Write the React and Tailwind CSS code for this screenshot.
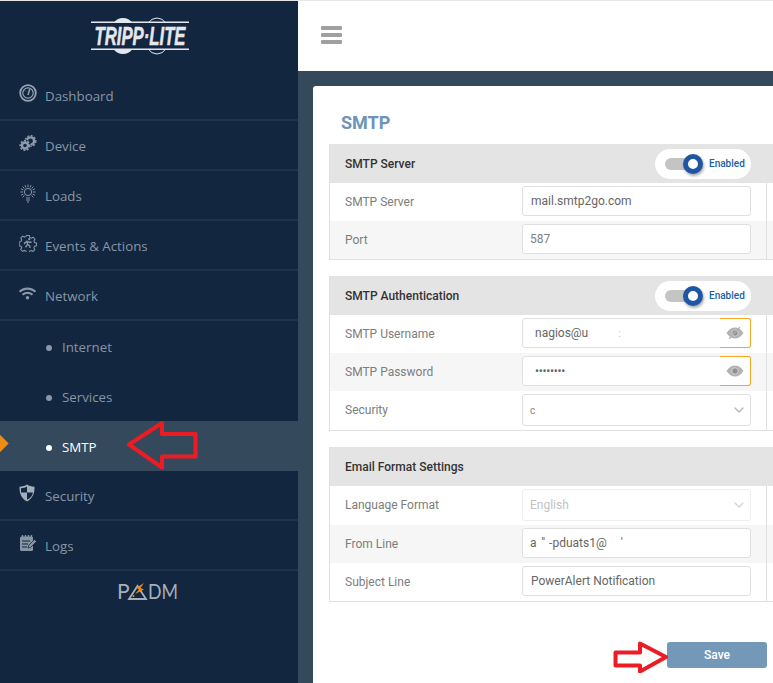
import { FaWifi } from 'react-icons/fa';
import { ChevronDown } from 'lucide-react';

const Gauge = () => (
  <svg width="18" height="18" viewBox="0 0 18 18" fill="none">
    <circle cx="9" cy="9" r="7.800" stroke="#95a3b1" strokeWidth="1.800" />
    <circle cx="9" cy="9" r="5.200" stroke="#95a3b1" strokeWidth="1.200" />
    <path d="M9 11 L10.800 5" stroke="#95a3b1" strokeWidth="1.500" />
    <path d="M6 6.500l.8.8" stroke="#95a3b1" strokeWidth="1" />
  </svg>
);

const Gears = () => (
  <svg width="18" height="17" viewBox="0 0 18 17" fill="none" stroke="#8d9cab">
    <circle cx="11.500" cy="6" r="3.600" strokeWidth="2.400" />
    <circle cx="11.500" cy="6" r="5.300" strokeWidth="1.500" strokeDasharray="2 1.500" />
    <circle cx="6" cy="10.500" r="6" fill="#12263f" stroke="none" />
    <circle cx="6" cy="10.500" r="3" strokeWidth="2.400" />
    <circle cx="6" cy="10.500" r="4.800" strokeWidth="1.600" strokeDasharray="2 1.500" />
  </svg>
);

const Bulb = () => (
  <svg width="18" height="20" viewBox="0 0 18 20" fill="none" stroke="currentColor" strokeWidth="1">
    <circle cx="9" cy="9" r="3.600" />
    <path d="M9 1.500v2.500M1.500 9H4M14 9h2.500M3.600 3.600l1.800 1.800M12.600 5.400l1.800-1.800M3.600 14.400l1.800-1.800M12.600 12.600l1.800 1.800M2 5.800l2.400 1M13.600 6.800l2.400-1M2 12.200l2.400-1M13.600 11.200l2.400 1M6 2.200l1 2.300M11 4.500l1-2.300" />
    <path d="M7 15h4M7 17h4M8 19h2" strokeWidth="1.200" />
  </svg>
);

const GearRun = () => (
  <svg width="18" height="18" viewBox="0 0 18 18" fill="none" stroke="currentColor">
    <path d="M7.500 1.200h3l.4 2 1.700.8 1.800-1 2 2.200-1.100 1.700.6 1.700 2 .5v2.900l-2 .5-.7 1.700 1 1.700-2.100 2-1.700-1-1.700.6-.5 1.900H7.400l-.5-1.900-1.700-.7-1.700 1-2-2 1-1.800-.7-1.600-1.900-.5V7.900l2-.5.6-1.700-1-1.800 2-2 1.800 1 1.600-.7z" strokeWidth="1.100" transform="scale(0.96) translate(0.3 0.3)" />
    <path d="M6.500 13.200l2-2.600-.3-3.200 2.600 1 1.800-.4M8.400 7.500L6 8.600l-.6 1.600M8.800 10.600l2 1.200.2 2.200" strokeWidth="1.400" />
    <circle cx="10.200" cy="5.200" r="1.100" fill="currentColor" stroke="none" />
  </svg>
);

const Shield = () => (
  <svg width="16" height="18" viewBox="0 0 16 18">
    <path d="M8 .5C10 1.800 12.600 2.600 15.500 2.800c.2 6.500-1.600 11.500-7.500 14.700C2.100 14.300.3 9.300.5 2.800 3.400 2.600 6 1.800 8 .5z" fill="#a3afbb" />
    <path d="M8 2.400v6.200H2.100C2 6.900 2 5.700 2 4.200 4.200 4 6.300 3.400 8 2.400zM8 8.600h5.900c-.4 3-1.900 5.300-5.900 7.200z" fill="#12263f" />
  </svg>
);

const Notepad = () => (
  <svg width="18" height="18" viewBox="0 0 18 18" fill="none">
    <rect x="1" y="2.500" width="13" height="14.500" rx="1.500" fill="currentColor" />
    <path d="M3.500 1v3M6.500 1v3M9.500 1v3M12.500 1v3" stroke="currentColor" strokeWidth="1.400" />
    <path d="M3 7h8M3 10h6M3 13h5" stroke="#12263f" strokeWidth="1.200" />
    <path d="M9 14l.6-2.600 6-6 2 2-6 6z" fill="currentColor" stroke="#12263f" strokeWidth="0.800" />
  </svg>
);

const Eye = ({ off }) => (
  <svg width="18" height="12" viewBox="0 0 18 12" fill="none">
    <path d="M0.500 6C3 2 6 .5 9 .5S15 2 17.500 6C15 10 12 11.500 9 11.500S3 10 .5 6z" fill="#b3b3b3" />
    <circle cx="9" cy="6" r="3.200" fill="#8f8f8f" stroke="#dddddd" strokeWidth="0.800" />
    {off && <path d="M3 12 14 0" stroke="#b3b3b3" strokeWidth="1.200" />}
  </svg>
);

const Logo = () => (
  <svg width="98" height="38" viewBox="0 0 98 38" className="overflow-visible">
    <ellipse cx="32" cy="19" rx="14" ry="18" fill="#e4e8ee" />
    <ellipse cx="66" cy="19" rx="13" ry="18" fill="#12263f" stroke="#e4e8ee" strokeWidth="1" />
    <rect x="0" y="5" width="98" height="28" fill="#12263f" />
    <rect x="0" y="4.500" width="98" height="1.500" fill="#e4e8ee" />
    <rect x="0" y="31.500" width="98" height="1.500" fill="#e4e8ee" />
    <text x="49" y="28" textAnchor="middle" textLength="91" lengthAdjust="spacingAndGlyphs" fontFamily="'Liberation Sans', sans-serif" fontWeight="700" fontStyle="italic" fontSize="26" stroke="#e4e8ee" strokeWidth="0.500" fill="#e4e8ee">TRIPP·LITE</text>
  </svg>
);

const Padm = () => (
  <svg width="62" height="20" viewBox="0 0 62 20" className="overflow-visible">
    <text x="0" y="17" fontFamily="Lato, sans-serif" fontWeight="400" fontSize="21" fill="#a5b0bb">P</text>
    <path d="M20.500 4 L29 17 H12 Z" fill="none" stroke="#a5b0bb" strokeWidth="1.800" />
    <path d="M27 1 L19 6 L22.500 7 L18 12 L27 7.500 L23.500 6 Z" fill="#f08a12" />
    <circle cx="16.500" cy="14" r="1" fill="#f08a12" />
    <text x="31" y="17" textLength="30" lengthAdjust="spacingAndGlyphs" fontFamily="Lato, sans-serif" fontWeight="400" fontSize="21" fill="#a5b0bb">DM</text>
  </svg>
);

const NavItem = ({ icon, label }) => (
  <div className="flex h-[50px] items-center border-b-2 border-[#1f3448] pl-[19px] text-[#8796a6]">
    <span className="flex w-[26px] -translate-y-0.5 items-center">{icon}</span>
    <span className="pt-[4px]">{label}</span>
  </div>
);

const SubItem = ({ label, active }) => (
  <div className={active ? 'relative flex h-[50px] items-center bg-[#34495c] pl-[46px] pt-[4px] text-white' : 'flex h-[50px] items-center pl-[46px] pt-[4px] text-[#8796a6]'}>
    {active && <span className="absolute left-[-7px] top-[16px] h-[13px] w-[13px] rotate-45 bg-[#ef8a12]" />}
    <span className={active ? 'mr-[10px] h-[6px] w-[6px] rounded-full bg-white' : 'mr-[10px] h-[6px] w-[6px] rounded-full bg-[#8b97a5]'} />
    <span>{label}</span>
  </div>
);

const Toggle = () => (
  <div className="flex h-[30px] w-[96px] items-center rounded-full bg-white pl-[10px]">
    <div className="relative h-[12px] w-[30px] rounded-full bg-[#c4c4c4]">
      <span className="absolute left-[18px] top-[-4px] h-[20px] w-[20px] rounded-full border-[5px] border-[#1f55a5] bg-white shadow-[1px_2px_3px_rgba(0,0,0,0.35)]" />
    </div>
    <span className="ml-[14px] text-[10px] font-medium text-[#1c5fa8]">Enabled</span>
  </div>
);

const Input = ({ children, tall, className = 'border-[#e0e0e0] text-[#666]' }) => (
  <div className={`relative flex w-[229px] items-center rounded-[3px] border bg-white text-[12px] ${tall ? 'h-[32px]' : 'h-[30px]'} ${className}`}>
    {children}
  </div>
);

const Row = ({ label, alt, tall, children }) => (
  <div className={`flex items-start pt-[3px] ${tall ? 'h-[39px]' : 'h-[38px]'} ${alt ? 'bg-[#f6f6f6]' : 'bg-white'}`}>
    <span className={`w-[192px] self-center pl-[15px] text-[12px] text-[#7d7d7d] ${tall ? 'pb-[5px]' : 'pb-[3px]'}`}>{label}</span>
    {children}
    <span className="ml-[15px] mt-[-3px] h-[calc(100%+3px)] w-px bg-[#e0e0e0]" />
  </div>
);

const Section = ({ title, toggle, children }) => (
  <section className="mb-[16px] w-[460px] border-b border-l border-[#e0e0e0]">
    <div className="flex h-[39px] items-center bg-[#e4e4e4] pr-[21px]">
      <span className="w-[325px] pl-[15px] text-[12px] font-medium text-[#333]">{title}</span>
      {toggle && <Toggle />}
    </div>
    {children}
  </section>
);

const AddOn = ({ off }) => (
  <span className="absolute right-[-1px] top-[-1px] flex h-[30px] w-[31px] items-center justify-center rounded-r-[3px] border border-l-0 border-[#f5a623] bg-white">
    <Eye off={off} />
  </span>
);

export default function App() {
  return (
    <div className="relative h-[683px] w-[773px] overflow-hidden border-t border-[#e6e6e6] bg-white" style={{ fontFamily: 'Roboto, sans-serif' }}>
      <div className="flex h-full">
        <aside className="h-full w-[298px] shrink-0 bg-[#12263f] text-[13.3px]" style={{ fontFamily: '"Open Sans", sans-serif' }}>
          <div className="flex h-[70px] justify-center pr-[18px] pt-[16px]">
            <Logo />
          </div>
          <NavItem icon={<Gauge />} label="Dashboard" />
          <NavItem icon={<Gears />} label="Device" />
          <NavItem icon={<Bulb />} label="Loads" />
          <NavItem icon={<GearRun />} label="Events & Actions" />
          <NavItem icon={<FaWifi size={17} />} label="Network" />
          <SubItem label="Internet" />
          <SubItem label="Services" />
          <SubItem label="SMTP" active />
          <NavItem icon={<Shield />} label="Security" />
          <NavItem icon={<Notepad />} label="Logs" />
          <div className="flex justify-center pr-[2px] pt-[11px]">
            <Padm />
          </div>
        </aside>

        <div className="flex min-w-0 flex-1 flex-col">
          <header className="flex h-[70px] shrink-0 items-center bg-white pl-[23px]">
            <svg width="21" height="18" viewBox="0 0 21 18" className="-translate-y-px">
              <rect width="21" height="4" rx="1" fill="#a0a0a0" />
              <rect y="7" width="21" height="4" rx="1" fill="#a0a0a0" />
              <rect y="14" width="21" height="4" rx="1" fill="#a0a0a0" />
            </svg>
          </header>
          <main className="flex-1 bg-[#34495c] pl-[15px] pt-[15px]">
            <div className="h-full rounded-tl-[3px] bg-white pl-[16px] pt-[25px]">
              <h1 className="mb-[10px] pl-[12px] text-[18px] font-bold leading-[23px] text-[#6b94b8]">SMTP</h1>

              <Section title="SMTP Server" toggle>
                <Row label="SMTP Server">
                  <Input><span className="pl-[8px]">mail.smtp2go.com</span></Input>
                </Row>
                <Row label="Port" alt>
                  <Input className="border-[#e0e0e0] text-[#808080]"><span className="pl-[7px]">587</span></Input>
                </Row>
              </Section>

              <Section title="SMTP Authentication" toggle>
                <Row label="SMTP Username">
                  <Input>
                    <span className="pl-[12px]">nagios@u</span>
                    <span className="ml-[30px] text-[10px] text-[#9cc4e8]">:</span>
                    <AddOn off />
                  </Input>
                </Row>
                <Row label="SMTP Password" alt>
                  <Input>
                    <span className="pl-[12px] text-[12px] tracking-[-0.3px]">••••••••</span>
                    <AddOn />
                  </Input>
                </Row>
                <Row label="Security" tall>
                  <Input tall>
                    <span className="pl-[7px] text-[10px] text-[#a08070]">c</span>
                    <ChevronDown size={16} className="absolute right-[3px] top-[7px] text-[#b5b5b5]" />
                  </Input>
                </Row>
              </Section>

              <Section title="Email Format Settings">
                <Row label="Language Format" tall>
                  <Input tall className="border-[#eeeeee] text-[#c2c2c2]">
                    <span className="pl-[7px]">English</span>
                    <ChevronDown size={16} className="absolute right-[3px] top-[7px] text-[#d5d5d5]" />
                  </Input>
                </Row>
                <Row label="From Line" alt>
                  <Input>
                    <span className="pl-[7px]">a</span>
                    <span className="ml-[5px]">''</span>
                    <span className="ml-[4px]">-pduats1@</span>
                    <span className="ml-[14px]">'</span>
                  </Input>
                </Row>
                <Row label="Subject Line">
                  <Input><span className="pl-[8px]">PowerAlert Notification</span></Input>
                </Row>
              </Section>

              <div className="flex justify-end pr-[6px] pt-[24px]">
                <button className="h-[26px] w-[100px] rounded-[3px] bg-[#7398b8] text-[12px] font-medium text-white">Save</button>
              </div>
            </div>
          </main>
        </div>
      </div>

      {/* red annotation arrows */}
      <svg width="72" height="50" viewBox="0 0 72 50" fill="none" className="absolute left-[127px] top-[420px]">
        <path d="M2 23.500 35 2v11h33.500v22.500H35V46.500z" stroke="#ed1c24" strokeWidth="4" strokeLinejoin="round" />
      </svg>
      <svg width="56" height="32" viewBox="0 0 56 32" fill="none" className="absolute left-[613px] top-[640px]">
        <path d="M53 16 27 2.500v9H2.500v13H27v6z" stroke="#ed1c24" strokeWidth="4" strokeLinejoin="round" />
      </svg>
    </div>
  );
}
